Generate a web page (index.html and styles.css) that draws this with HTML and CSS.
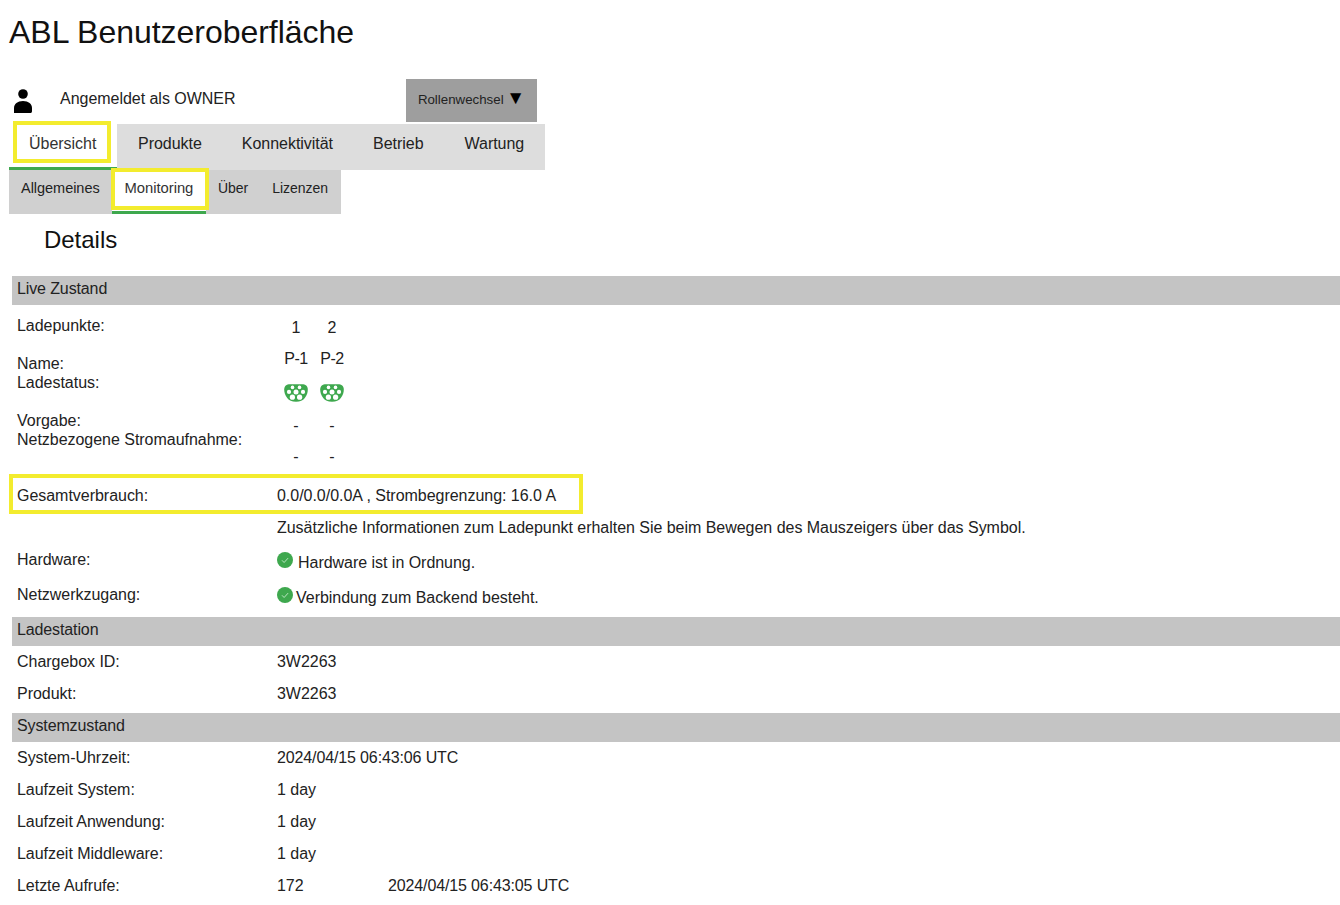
FILE: index.html
```html
<!DOCTYPE html>
<html lang="de">
<head>
<meta charset="utf-8">
<title>ABL Benutzeroberfläche</title>
<link rel="stylesheet" href="styles.css">
</head>
<body>
<h1 class="title">ABL Benutzeroberfläche</h1>
<div class="userbar">
  <svg class="user-icon" viewBox="0 0 18 24" aria-hidden="true"><circle cx="9" cy="5" r="4.800"/><path d="M0 24v-5c0-4 3.500-7 9-7s9 3 9 7v3c0 1.500-0.500 2-2 2z"/></svg>
  <span class="user-text">Angemeldet als OWNER</span>
  <button class="role-btn">Rollenwechsel <span class="caret">▼</span></button>
</div>
<nav class="tabs">
  <a class="tab tab-active">Übersicht<span class="hl hl-main"></span></a>
  <div class="tab-rest">
    <a class="tab t-prod">Produkte</a>
    <a class="tab t-kon">Konnektivität</a>
    <a class="tab t-bet">Betrieb</a>
    <a class="tab t-war">Wartung</a>
  </div>
</nav>
<nav class="subtabs">
  <a class="sub s-all">Allgemeines</a>
  <a class="sub sub-active">Monitoring<span class="hl hl-sub"></span></a>
  <a class="sub s-ueb">Über</a>
  <a class="sub s-liz">Lizenzen</a>
</nav>
<h2 class="details">Details</h2>
<main class="content">
  <div class="section-head">Live Zustand</div>
  <div class="live">
    <div class="live-labels">
      <div class="ll l1">Ladepunkte:</div>
      <div class="ll l2">Name:</div>
      <div class="ll">Ladestatus:</div>
      <div class="ll l4">Vorgabe:</div>
      <div class="ll">Netzbezogene Stromaufnahme:</div>
    </div>
    <div class="live-grid">
      <span class="lv r1">1</span><span class="lv r1">2</span>
      <span class="lv r2">P-1</span><span class="lv r2">P-2</span>
      <span class="lv r3"><svg class="plug" viewBox="0 0 24 18"><path class="plug-body" d="M6 0.300h12c3.500 0 5.800 1.800 5.800 5.200 0 3-1 6-3 8.500-2 2.500-4.500 3.700-8.800 3.700s-6.800-1.200-8.800-3.700c-2-2.500-3-5.500-3-8.500C0.200 2.100 2.500 0.300 6 0.300z"/><g class="plug-pin"><circle cx="8.500" cy="3.400" r="1.800"/><circle cx="15.500" cy="3.400" r="1.800"/><circle cx="5" cy="7.900" r="2.100"/><circle cx="12" cy="7.900" r="2.500"/><circle cx="19" cy="7.900" r="2.100"/><circle cx="8.400" cy="13.200" r="2.600"/><circle cx="15.600" cy="13.200" r="2.600"/></g></svg></span>
      <span class="lv r3"><svg class="plug" viewBox="0 0 24 18"><path class="plug-body" d="M6 0.300h12c3.500 0 5.800 1.800 5.800 5.200 0 3-1 6-3 8.500-2 2.500-4.500 3.700-8.800 3.700s-6.800-1.200-8.800-3.700c-2-2.500-3-5.500-3-8.500C0.200 2.100 2.500 0.300 6 0.300z"/><g class="plug-pin"><circle cx="8.500" cy="3.400" r="1.800"/><circle cx="15.500" cy="3.400" r="1.800"/><circle cx="5" cy="7.900" r="2.100"/><circle cx="12" cy="7.900" r="2.500"/><circle cx="19" cy="7.900" r="2.100"/><circle cx="8.400" cy="13.200" r="2.600"/><circle cx="15.600" cy="13.200" r="2.600"/></g></svg></span>
      <span class="lv r4">-</span><span class="lv r4">-</span>
      <span class="lv r5">-</span><span class="lv r5">-</span>
    </div>
  </div>
  <div class="row row-total"><span class="hl hl-total"></span><span class="k">Gesamtverbrauch:</span><span class="v">0.0/0.0/0.0A , Strombegrenzung: 16.0 A</span></div>
  <div class="row row-info"><span class="k"></span><span class="v">Zusätzliche Informationen zum Ladepunkt erhalten Sie beim Bewegen des Mauszeigers über das Symbol.</span></div>
  <div class="row row-status"><span class="k">Hardware:</span><span class="v v-status"><svg class="ok" viewBox="0 0 16 16"><circle cx="8" cy="8" r="8"/><path d="M5 8.300l2.100 2.200 4-4.400"/></svg><span class="st st-hw">Hardware ist in Ordnung.</span></span></div>
  <div class="row row-status"><span class="k">Netzwerkzugang:</span><span class="v v-status"><svg class="ok" viewBox="0 0 16 16"><circle cx="8" cy="8" r="8"/><path d="M5 8.300l2.100 2.200 4-4.400"/></svg><span class="st">Verbindung zum Backend besteht.</span></span></div>
  <div class="section-head sh-2">Ladestation</div>
  <div class="row"><span class="k">Chargebox ID:</span><span class="v">3W2263</span></div>
  <div class="row"><span class="k">Produkt:</span><span class="v">3W2263</span></div>
  <div class="section-head sh-3">Systemzustand</div>
  <div class="row"><span class="k">System-Uhrzeit:</span><span class="v date">2024/04/15 06:43:06 UTC</span></div>
  <div class="row"><span class="k">Laufzeit System:</span><span class="v">1 day</span></div>
  <div class="row"><span class="k">Laufzeit Anwendung:</span><span class="v">1 day</span></div>
  <div class="row"><span class="k">Laufzeit Middleware:</span><span class="v">1 day</span></div>
  <div class="row"><span class="k">Letzte Aufrufe:</span><span class="v v-calls"><span class="calls">172</span><span class="date">2024/04/15 06:43:05 UTC</span></span></div>
</main>
</body>
</html>
```
FILE: styles.css
```css
* { box-sizing: border-box; }
html, body { margin: 0; padding: 0; }
body {
  width: 1340px;
  height: 905px;
  overflow: hidden;
  background: #fff;
  color: #222;
  font-family: "Liberation Sans", Arial, sans-serif;
  font-size: 16px;
  letter-spacing: -0.03px;
  padding-left: 9px;
}
.title { margin: 0; height: 79px; padding-top: 13px; font-size: 32px; line-height: 38px; font-weight: 400; color: #111; }
.userbar { position: relative; display: flex; height: 45px; align-items: flex-start; }
.user-icon { width: 18px; height: 24px; margin: 10px 0 0 5px; fill: #000; flex: none; }
.user-text { margin-left: 28px; line-height: 20px; padding-top: 10px; width: 346px; }
.role-btn { width: 131px; height: 43px; border: 0; background: #9e9e9e; color: #222; font: 13.3px "Liberation Sans", Arial, sans-serif; padding: 0 0 4px; }
.caret { margin-left: -1px; font-size: 19px; line-height: 14px; color: #000; }
.tabs { display: flex; height: 46px; }
.tab { display: block; line-height: 40px; color: #222; }
.tab-active { position: relative; width: 108px; padding-left: 20px; background: #fff; border-bottom: 3px solid #3ea84e; color: #333; }
.tab-rest { display: flex; width: 428px; background: #ddd; }
.t-prod { margin-left: 21px; }
.t-kon { margin-left: 40px; }
.t-bet { margin-left: 40px; }
.t-war { margin-left: 41px; }
.hl { position: absolute; border: 4px solid #f3ec2e; pointer-events: none; }
.hl-main { left: 4px; top: -3px; width: 98px; height: 42px; }
.subtabs { display: flex; width: 332px; height: 44px; background: #d0d0d0; font-size: 14px; }
.sub { display: block; line-height: 36px; color: #222; }
.s-all { margin-left: 12px; width: 91px; font-size: 14.5px; }
.sub-active { position: relative; width: 94px; padding-left: 12.500px; font-size: 14.8px; background: #fff; border-bottom: 3px solid #3ea84e; color: #333; }
.hl-sub { left: -1px; top: -2px; width: 98px; height: 42px; }
.s-ueb { margin-left: 12px; }
.s-liz { margin-left: 24px; }
.details { margin: 0; height: 62px; padding: 11px 0 0 35px; font-size: 24px; line-height: 30px; font-weight: 400; color: #111; }
.content { margin-left: 3px; }
.section-head { height: 29px; background: #c4c4c4; padding-left: 5px; line-height: 25px; letter-spacing: -0.12px; }
.live { display: flex; height: 171px; }
.live-labels { width: 265px; padding: 11px 0 0 5px; }
.ll { height: 19px; line-height: 19px; }
.l1 { height: 38px; }
.l4 { margin-top: 19px; }
.live-grid { display: grid; grid-template-columns: 36px 36px; grid-template-rows: 31px 31px 36px 31px 31px; padding-top: 7px; margin-left: 1px; justify-items: center; }
.lv { line-height: 31px; display: block; height: 31px; }
.r2 { letter-spacing: -0.4px; }
.r3 { padding-top: 10px; height: 36px; }
.plug { display: block; width: 24px; height: 18px; }
.plug-body { fill: #3ea84e; }
.plug-pin { fill: #fff; }
.row { position: relative; display: flex; height: 32px; line-height: 32px; }
.k { width: 265px; padding-left: 5px; flex: none; }
.v { flex: none; }
.date { letter-spacing: -0.13px; }
.row-total { height: 39px; line-height: 39px; }
.hl-total { left: -3px; top: -2px; width: 574px; height: 40px; }
.row-info { height: 31px; line-height: 26px; }
.row-status { height: 35px; line-height: 28px; }
.v-status { display: flex; align-items: flex-start; }
.ok { width: 16px; height: 16px; margin-top: 6px; fill: #3ea84e; stroke: none; }
.ok path { fill: none; stroke: #b9e6c0; stroke-width: 1; }
.st { margin-left: 3px; padding-top: 3px; }
.st-hw { margin-left: 5px; }
.sh-2 { margin-top: 1px; }
.sh-3 { margin-top: 3px; }
.v-calls { display: flex; }
.calls { width: 111px; }
```
